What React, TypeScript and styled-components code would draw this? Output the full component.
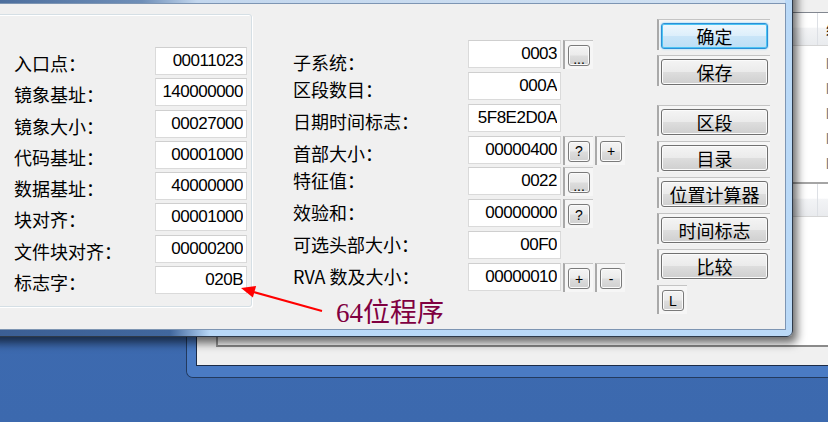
import React from "react";
import styled, { createGlobalStyle } from "styled-components";

interface Row {
  label: string;
  value: string;
  shift?: number;
  extras?: string[];
}

const leftRows: Row[] = [
  { label: "入口点：", value: "00011023" },
  { label: "镜象基址：", value: "140000000" },
  { label: "镜象大小：", value: "00027000" },
  { label: "代码基址：", value: "00001000" },
  { label: "数据基址：", value: "40000000" },
  { label: "块对齐：", value: "00001000" },
  { label: "文件块对齐：", value: "00000200" },
  { label: "标志字：", value: "020B" }
];

const rightRows: Row[] = [
  { label: "子系统：", value: "0003", shift: 8, extras: ["..."] },
  { label: "区段数目：", value: "000A", shift: 3 },
  { label: "日期时间标志：", value: "5F8E2D0A", shift: 3 },
  { label: "首部大小：", value: "00000400", shift: 3, extras: ["?", "+"] },
  { label: "特征值：", value: "0022", shift: -1, extras: ["..."] },
  { label: "效验和：", value: "00000000", shift: -1, extras: ["?"] },
  { label: "可选头部大小：", value: "00F0", shift: -1 },
  { label: "RVA 数及大小：", value: "00000010", shift: -1, extras: ["+", "-"] }
];

const sideButtons = [
  { text: "确定", primary: true },
  { text: "保存" },
  { text: "区段", spaced: true },
  { text: "目录" },
  { text: "位置计算器" },
  { text: "时间标志" },
  { text: "比较" }
];

const App = () => {
  return (
    <>
      <GlobalStyle />
      <Screen>
        <BackWindow>
          <BackClient>
            <Panel>
              <ListView $height={169}>
                <ListHeader>
                  <HeaderCell $width={600} />
                  <HeaderCell $width={120}>编号</HeaderCell>
                </ListHeader>
                <ListBody>
                  {[0, 1, 2, 3, 4].map((i) => (
                    <ListRow key={i}>
                      <ListCell $width={600} />
                      <ListCell $width={120}>l</ListCell>
                    </ListRow>
                  ))}
                </ListBody>
              </ListView>
              <ListView $second>
                <ListHeader>
                  <HeaderCell $width={600} />
                  <HeaderCell $width={120} />
                </ListHeader>
              </ListView>
            </Panel>
          </BackClient>
        </BackWindow>

        <Dialog>
          <TitleBar />
          <Client>
            <GroupBox>
              <FieldGrid $cols="141px 92px" $gap={3.3}>
                {leftRows.map((r) => (
                  <React.Fragment key={r.label}>
                    <Label $shift={2}>{r.label}</Label>
                    <Field readOnly value={r.value} />
                  </React.Fragment>
                ))}
              </FieldGrid>
            </GroupBox>

            <RightFields>
              <FieldGrid $cols="175px 93px auto" $gap={3.86}>
                {rightRows.map((r) => (
                  <React.Fragment key={r.label}>
                    <Label $shift={r.shift ?? 0}>{r.label}</Label>
                    <Field readOnly value={r.value} />
                    <Extras>
                      {(r.extras ?? []).map((e) => (
                        <SmallFrame key={e}>
                          <SmallButton $dots={e === "..."}>{e}</SmallButton>
                        </SmallFrame>
                      ))}
                    </Extras>
                  </React.Fragment>
                ))}
              </FieldGrid>
            </RightFields>

            <ButtonColumn>
              {sideButtons.map((b) => (
                <BtnFrame key={b.text} $spaced={b.spaced}>
                  <Btn $primary={b.primary}>{b.text}</Btn>
                </BtnFrame>
              ))}
              <SmallFrame>
                <SmallButton>L</SmallButton>
              </SmallFrame>
            </ButtonColumn>
          </Client>
        </Dialog>

        <Arrow width="100" height="36" viewBox="0 0 100 36">
          <line x1="86" y1="29" x2="14" y2="9" stroke="#ff0000" strokeWidth="2" />
          <polygon points="5,6 20.1,4 16.9,15.6" fill="#ff0000" />
        </Arrow>
        <Note>64位程序</Note>
      </Screen>
    </>
  );
};

export default App;

const GlobalStyle = createGlobalStyle`
  html, body {
    margin: 0;
    padding: 0;
  }
  body {
    width: 828px;
    height: 422px;
    overflow: hidden;
    background: #3e6cb3;
    font-family: "Noto Sans CJK SC", "Liberation Sans", sans-serif;
  }
`;

const Screen = styled.div`
  position: relative;
  width: 828px;
  height: 422px;
  overflow: hidden;
  background: linear-gradient(#3f6db5, #3c69ae);
`;

/* window behind the dialog */
const BackWindow = styled.div`
  position: absolute;
  left: 187px;
  top: -60px;
  width: 720px;
  height: 437px;
  box-sizing: border-box;
  display: flex;
  border-style: solid;
  border-color: #4a7bc4;
  border-width: 10px 10px 12px 10px;
  border-radius: 0 0 0 6px;
  box-shadow: 0 0 0 1px #233a5e;
`;

const BackClient = styled.div`
  flex: 1;
  display: flex;
  flex-direction: column;
  padding: 62px 0 18px 19px;
  background: #f0f0f0;
  box-shadow: 0 0 0 1px #1c2b46;
`;

const Panel = styled.div`
  flex: 1;
  display: flex;
  flex-direction: column;
  background: #fff;
  border-top: 1px solid #828790;
  border-left: 2px solid #9a9a9a;
  border-bottom: 2px solid #8a8a8a;
`;

const ListView = styled.div<{ $height?: number; $second?: boolean }>`
  display: flex;
  flex-direction: column;
  ${({ $height }) => ($height ? `height: ${$height}px;` : "flex: 1;")}
  ${({ $second }) => ($second ? "border-top: 2px solid #a5a5a5;" : "")}
`;

const ListHeader = styled.div`
  display: flex;
  height: 32px;
  flex-shrink: 0;
  background: linear-gradient(#ffffff, #ffffff 45%, #f3f4f6 46%, #e9ebee);
  border-bottom: 1px solid #d5d5d5;
`;

const HeaderCell = styled.div<{ $width: number }>`
  width: ${({ $width }) => $width}px;
  flex-shrink: 0;
  box-sizing: border-box;
  padding-left: 8px;
  border-right: 1px solid #dde0e5;
  font-size: 15px;
  line-height: 32px;
  color: #000;
`;

const ListBody = styled.div`
  padding-top: 6px;
`;

const ListRow = styled.div`
  display: flex;
  height: 25px;
`;

const ListCell = styled.div<{ $width: number }>`
  width: ${({ $width }) => $width}px;
  flex-shrink: 0;
  box-sizing: border-box;
  padding-left: 8px;
  font-family: "Liberation Sans", sans-serif;
  font-size: 14px;
  line-height: 25px;
  color: #777;
`;

/* the dialog */
const Dialog = styled.div`
  position: absolute;
  left: -16px;
  top: -40px;
  width: 809px;
  height: 377px;
  box-sizing: border-box;
  display: flex;
  flex-direction: column;
  padding: 0 7px 7px 7px;
  border: 1px solid #2e3a4a;
  border-radius: 0 0 6px 6px;
  background: linear-gradient(
    to right,
    #3b5e93 0px,
    #41679d 185px,
    #b8d8f7 225px,
    #bad9f7 100%
  );
  box-shadow: 4px 6px 10px rgba(0, 0, 0, 0.6);
`;

const TitleBar = styled.div`
  height: 43px;
  flex-shrink: 0;
  background: linear-gradient(
    to right,
    #4b6d9c 0px,
    #6f8fb8 150px,
    #c3d7ee 205px,
    #d2e2f3 100%
  );
`;

const Client = styled.div`
  flex: 1;
  display: flex;
  align-items: flex-start;
  padding-left: 4px;
  background: #f0f0f0;
  box-shadow: 0 0 0 1px #7d95b3;
`;

const GroupBox = styled.div`
  width: 256px;
  height: 293px;
  margin-top: 10px;
  box-sizing: border-box;
  padding: 32px 4px 0 17px;
  border: 1px solid #d5dfe5;
  border-radius: 3px;
  box-shadow: inset 1px 1px 0 #fff, 1px 1px 0 #fff;
`;

const FieldGrid = styled.div<{ $cols: string; $gap: number }>`
  display: grid;
  grid-template-columns: ${({ $cols }) => $cols};
  grid-auto-rows: 28px;
  row-gap: ${({ $gap }) => $gap}px;
  align-items: start;
`;

const Label = styled.div<{ $shift: number }>`
  height: 28px;
  box-sizing: border-box;
  padding-top: ${({ $shift }) => Math.max($shift, 0)}px;
  margin-top: ${({ $shift }) => Math.min($shift, 0)}px;
  font-family: "Noto Sans CJK SC", "Liberation Sans", sans-serif;
  font-size: 18px;
  line-height: 28px;
  color: #000;
  white-space: nowrap;
`;

const Field = styled.input`
  width: 100%;
  height: 28px;
  box-sizing: border-box;
  margin: 0;
  padding: 0 3px 0 0;
  border: 1px solid #dadada;
  border-top-color: #cfcfcf;
  background: #fff;
  outline: none;
  text-align: right;
  font-family: "Liberation Sans", Arial, sans-serif;
  font-size: 17px;
  letter-spacing: -0.5px;
  color: #000;
`;

const RightFields = styled.div`
  margin-left: 41px;
  margin-top: 36px;
`;

const Extras = styled.div`
  display: flex;
  gap: 2px;
  padding-left: 2px;
`;

const SmallFrame = styled.div`
  width: 30px;
  height: 29px;
  box-sizing: border-box;
  display: flex;
  padding: 4px 3px 3px 3px;
  border-top: 1px solid #c4c4c4;
  border-left: 2px solid #a9a9a9;
  background: #f6f6f6;
`;

const SmallButton = styled.button<{ $dots?: boolean }>`
  flex: 1;
  margin: 0;
  padding: ${({ $dots }) => ($dots ? "6px 0 0" : "0")};
  border: 1px solid #7a7a7a;
  border-radius: 3px;
  background: linear-gradient(#f4f4f4 0%, #ebebeb 48%, #dddddd 52%, #d0d0d0 100%);
  box-shadow: inset 0 0 0 1px #fbfbfb;
  font-family: "Liberation Sans", Arial, sans-serif;
  font-size: 14px;
  line-height: 1;
  color: #000;
`;

const ButtonColumn = styled.div`
  margin-left: auto;
  margin-right: 15px;
  margin-top: 15px;
  width: 113px;
  display: flex;
  flex-direction: column;
  gap: 5px;
`;

const BtnFrame = styled.div<{ $spaced?: boolean }>`
  height: 31px;
  box-sizing: border-box;
  display: flex;
  padding: 3px 2px 1px 2px;
  margin-top: ${({ $spaced }) => ($spaced ? 14 : 0)}px;
  border-top: 1px solid #c4c4c4;
  border-left: 2px solid #a9a9a9;
  background: #f6f6f6;
`;

const Btn = styled.button<{ $primary?: boolean }>`
  flex: 1;
  margin: 0;
  padding: 0;
  border-radius: 3px;
  font-family: "Noto Sans CJK SC", sans-serif;
  font-size: 18px;
  line-height: 1;
  color: #000;
  border: ${({ $primary }) => ($primary ? "1px solid #2b8fd8" : "1px solid #707070")};
  background: ${({ $primary }) =>
    $primary
      ? "linear-gradient(#eef7fd 0%, #ddeffb 48%, #c9e5f8 52%, #bcdff6 100%)"
      : "linear-gradient(#f4f4f4 0%, #ebebeb 48%, #dddddd 52%, #cfcfcf 100%)"};
  box-shadow: ${({ $primary }) =>
    $primary ? "inset 0 0 0 1px #4cc4f2, 0 0 2px #5fc6f5" : "inset 0 0 0 1px #fbfbfb"};
`;

/* annotation drawn over the screenshot */
const Arrow = styled.svg`
  position: absolute;
  left: 236px;
  top: 282px;
  overflow: visible;
`;

const Note = styled.div`
  position: absolute;
  left: 336px;
  top: 298px;
  font-family: "Liberation Serif", "Noto Sans CJK SC", serif;
  font-size: 27px;
  line-height: 30px;
  color: #800040;
  white-space: nowrap;
`;
